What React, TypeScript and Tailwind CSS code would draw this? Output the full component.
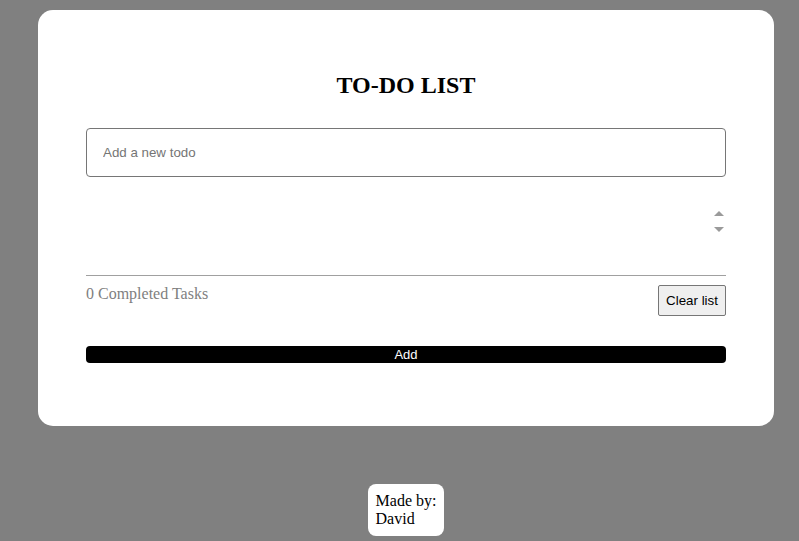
import React from "react";

const App: React.FC = () => {
  const [todo, setTodo] = React.useState("");
  const [todos, setTodos] = React.useState<string[]>([]);
  const completed = 0;

  return (
    <div className="min-h-screen w-full bg-[#808080] pt-[10px] pb-[5px] font-['Liberation_Serif',serif]">
      <div className="ml-[38px] w-[736px] flex flex-col items-center">
        <div className="w-full bg-white rounded-[15px] px-[48px] pt-[61px] pb-[63px]">
          <h1 className="text-center text-[24px] leading-[28px] font-bold text-black">
            TO-DO LIST
          </h1>

          <input
            type="text"
            value={todo}
            onChange={(e) => setTodo(e.target.value)}
            placeholder="Add a new todo"
            className="mt-[29px] block w-full h-[49px] rounded-[4px] border border-[#767676] px-[16px] text-[13.333px] font-['Liberation_Sans',Arial,sans-serif] text-black placeholder:text-[#757575] outline-none"
          />

          {/* empty list, only the scroll arrows show */}
          <div className="mt-[28px] h-[32px] flex justify-end">
            <div className="w-[15px] flex flex-col">
              <div className="h-[16px] flex items-center justify-center">
                <div className="w-0 h-0 border-l-[5px] border-r-[5px] border-b-[5px] border-l-transparent border-r-transparent border-b-[#9a9a9a]" />
              </div>
              <div className="h-[16px] flex items-center justify-center">
                <div className="w-0 h-0 border-l-[5px] border-r-[5px] border-t-[5px] border-l-transparent border-r-transparent border-t-[#9a9a9a]" />
              </div>
            </div>
            {todos.map((t, i) => (
              <div key={i}>{t}</div>
            ))}
          </div>

          <div className="mt-[38px] h-px bg-[#a0a0a0]" />

          <div className="mt-[8px] flex justify-between items-start">
            <span className="mt-[1px] text-[16px] leading-[18px] text-[#808080]">
              {completed} Completed Tasks
            </span>
            <button
              onClick={() => setTodos([])}
              className="mt-[1px] w-[68px] h-[31px] bg-[#efefef] border border-[#767676] rounded-[2px] text-[13.333px] text-black font-['Liberation_Sans',Arial,sans-serif]"
            >
              Clear list
            </button>
          </div>

          <button
            onClick={() => {
              if (todo.trim()) {
                setTodos([...todos, todo]);
                setTodo("");
              }
            }}
            className="mt-[30px] block w-full h-[17px] bg-black rounded-[4px] text-white text-[13px] leading-[17px] font-['Liberation_Sans',Arial,sans-serif]"
          >
            Add
          </button>
        </div>

        <div className="mt-[58px] bg-white rounded-[8px] p-[8px] text-[16px] leading-[18px] text-black">
          Made by:
          <br />
          David
        </div>
      </div>
    </div>
  );
};

export default App;
